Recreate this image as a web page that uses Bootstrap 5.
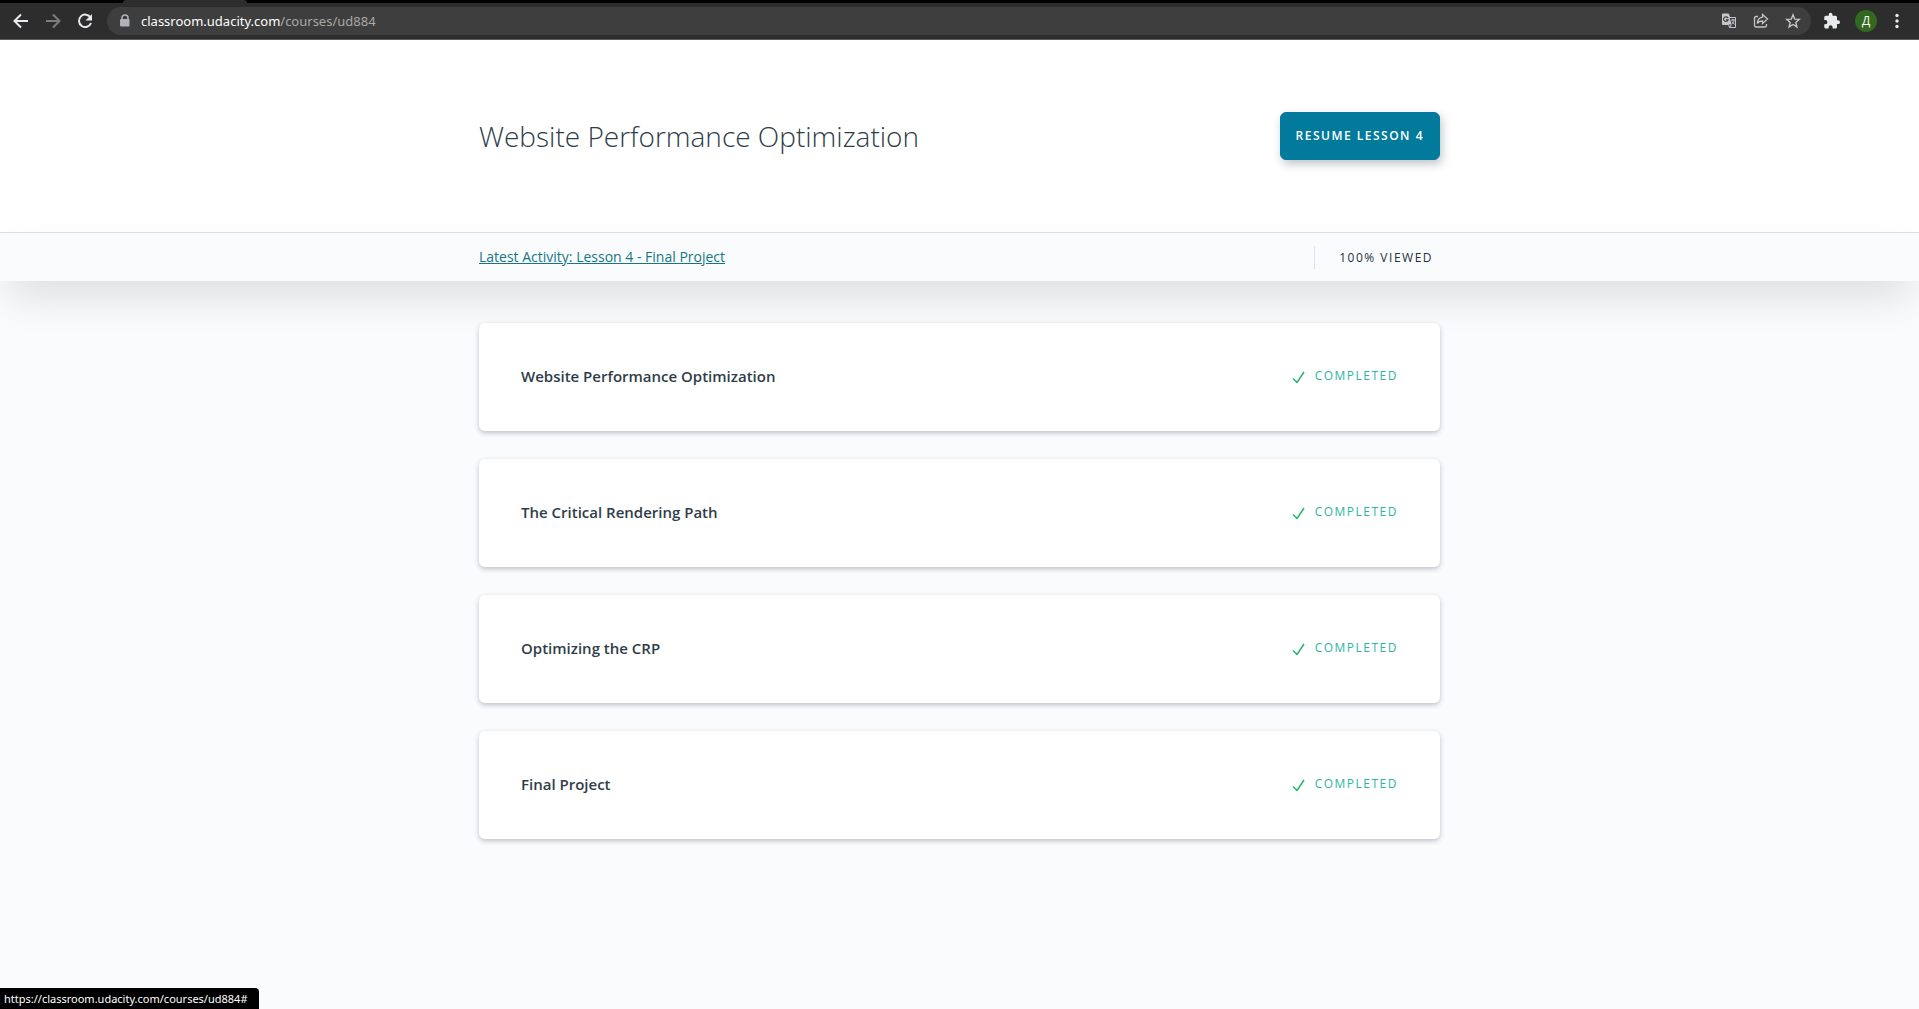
<!DOCTYPE html>
<html lang="en">
<head>
<meta charset="utf-8">
<meta name="viewport" content="width=device-width, initial-scale=1">
<title>Website Performance Optimization</title>
<link href="https://cdn.jsdelivr.net/npm/bootstrap@5.3.0/dist/css/bootstrap.min.css" rel="stylesheet">
<style>
  body { font-family: "Open Sans", "Noto Sans", sans-serif; background: #fafbfd; color: #2e3d49; }
  .browser-tabs { height: 3px; background: #000; }
  .browser-tabs span { display: block; width: 124px; height: 3px; margin-left: 123px; background: #2d2d2d; border-radius: 3px 3px 0 0; }
  .browser-bar { height: 37px; background: #2d2d2d; border-bottom: 1px solid #5a5a5a; padding: 0 10px 0 9px; }
  .tool-btn { width: 24px; height: 24px; color: #e8eaed; }
  .tool-btn.muted { color: #7d7d7d; }
  .tool-btn svg, .address svg { display: block; }
  .address { height: 28px; border-radius: 14px; background: #3e3e3e; padding: 0 6px 0 12px; margin-left: 2px; color: #c4c6c9; }
  .url { font-family: "Noto Sans", sans-serif; font-size: 13px; line-height: 20px; color: #a8a8a8; text-decoration: none; }
  .url b { font-weight: 400; color: #fff; }
  .padlock { margin-right: 10px; }
  .avatar { width: 22px; height: 22px; background: #33691e; color: #fff; font-size: 12px; line-height: 20px; }
  .course-wrap { width: 100%; max-width: 961px; }
  .course-head { background: #fff; padding: 72px 0; }
  .course-title { font-size: 28px; font-weight: 300; line-height: 48px; }
  .caps { font-size: 12px; letter-spacing: .125em; }
  .resume { --bs-btn-bg: #017a9b; --bs-btn-color: #fff; --bs-btn-border-color: #017a9b; --bs-btn-hover-bg: #016a87; --bs-btn-hover-color: #fff; --bs-btn-font-size: 12px; height: 48px; padding: 0 15px; border-radius: 6px; font-weight: 600; box-shadow: 2px 4px 10px rgba(46,61,73,.3); }
  .activity { background: #fafbfd; border-top: 1px solid #dbdee2; height: 49px; box-shadow: 0 20px 40px -8px rgba(0,0,0,.15); }
  .activity a { font-size: 14px; line-height: 24px; color: #157783; }
  .viewed { border-left: 1px solid #dbe2e8; padding: 0 7px 0 24px; line-height: 23px; color: #25313c; }
  .lessons { padding: 42px 0; gap: 28px; }
  .lesson { height: 108px; padding: 0 42px 2px; background: #fff; border-radius: 6px; box-shadow: 0 2px 5px rgba(46,61,73,.3); color: #2e3d49; text-decoration: none; }
  .lesson h2 { font-size: 15px; font-weight: 600; line-height: 24px; }
  .done { gap: 9px; line-height: 20px; color: #2cb5a5; }
  .status-url { position: fixed; left: 0; bottom: 0; height: 21px; padding: 0 11px 0 4px; background: #000; color: #fff; border-top-right-radius: 4px; font-family: "Noto Sans", sans-serif; font-size: 11px; line-height: 21px; }
</style>
</head>
<body>
<div class="browser-tabs"><span></span></div>
<nav class="browser-bar d-flex align-items-center" aria-label="Browser">
  <button class="tool-btn btn p-0 border-0 me-2" aria-label="Back"><svg width="24" height="24" viewBox="0 0 24 24" fill="none" stroke="currentColor" stroke-width="2"><path d="M19 12H6M12 5.500L5.500 12l6.500 6.500"/></svg></button>
  <button class="tool-btn muted btn p-0 border-0 me-2" aria-label="Forward"><svg width="24" height="24" viewBox="0 0 24 24" fill="none" stroke="currentColor" stroke-width="2"><path d="M5 12h13M12 5.500l6.500 6.500-6.500 6.500"/></svg></button>
  <button class="tool-btn btn p-0 border-0 me-2" aria-label="Reload"><svg width="24" height="24" viewBox="0 0 24 24" fill="none" stroke="currentColor" stroke-width="2"><path d="M17.500 8.600A6.200 6.200 0 1 0 18 14"/><path d="M19 5v6.500h-6.500z" fill="currentColor" stroke="none"/></svg></button>
  <div class="address d-flex align-items-center flex-grow-1">
    <svg class="padlock" width="12" height="14" viewBox="0 0 12 14"><path d="M3 6V4a3 3 0 0 1 6 0v2" fill="none" stroke="#b0b2b5" stroke-width="1.500"/><rect x="1" y="5" width="9.500" height="7.500" rx="1" fill="#b0b2b5"/></svg>
    <a class="url me-auto" href="#"><b>classroom.udacity.com</b>/courses/ud884</a>
    <svg width="16" height="16" viewBox="0 0 16 16" aria-hidden="true"><path d="M1.500 1h6l1.300 3.500H14.500V14.500H8.500L7.500 11.500H1.500z" fill="none" stroke="currentColor" stroke-width="1"/><path d="M1.500 1h6l3.200 10.500H1.500z" fill="currentColor"/><path d="M7 5.200A2.300 2.300 0 1 0 7.100 6.800H5" fill="none" stroke="#3e3e3e" stroke-width="1.200"/><path d="M10 7h4M12 6v1.500M13 7.500c-.4 2-1.500 3-2 3.500M11 8.500l2.500 3M10.500 11.500L8.500 14.500" fill="none" stroke="currentColor"/></svg>
    <svg class="ms-3" width="16" height="16" viewBox="0 0 16 16" fill="none" stroke="currentColor" stroke-width="1.300" aria-hidden="true"><path d="M5 3.500H3A1.500 1.500 0 0 0 1.500 5v7.500A1.500 1.500 0 0 0 3 14h9a1.500 1.500 0 0 0 1.500-1.500V11"/><path d="M9.500 1.500L14.500 6l-5 4.500V8C7 8 5.500 8.700 4.300 10.500 4.600 7 6.500 4.500 9.500 4.200z"/></svg>
    <svg class="ms-3 me-1" width="16" height="16" viewBox="0 0 16 16" fill="none" stroke="currentColor" stroke-width="1.400" aria-hidden="true"><path d="M8 1.800l1.700 4.300 4.600.3-3.500 3 1.100 4.500L8 11.500l-3.900 2.400 1.100-4.500-3.500-3 4.600-.3z"/></svg>
  </div>
  <button class="tool-btn btn p-0 border-0 ms-2 me-2" aria-label="Extensions"><svg width="24" height="24" viewBox="-5 -4 32 32" fill="currentColor"><path d="M20.500 11H19V7a2 2 0 0 0-2-2h-4V3.500a2.500 2.500 0 0 0-5 0V5H4a2 2 0 0 0-2 2v3.800h1.500a2.700 2.700 0 0 1 0 5.400H2V20c0 1.100.9 2 2 2h3.800v-1.500a2.700 2.700 0 0 1 5.400 0V22H17a2 2 0 0 0 2-2v-4h1.500a2.500 2.500 0 0 0 0-5z"/></svg></button>
  <button class="avatar btn p-0 border-0 rounded-circle ms-1">Д</button>
  <button class="tool-btn btn p-0 border-0 ms-2" aria-label="Menu"><svg width="24" height="24" viewBox="0 0 24 24" fill="currentColor"><circle cx="12" cy="6.500" r="1.700"/><circle cx="12" cy="12" r="1.700"/><circle cx="12" cy="17.500" r="1.700"/></svg></button>
</nav>

<header>
  <div class="course-head">
    <div class="course-wrap mx-auto d-flex justify-content-between align-items-center">
      <h1 class="course-title m-0">Website Performance Optimization</h1>
      <button class="resume caps btn">RESUME LESSON 4</button>
    </div>
  </div>
  <div class="activity d-flex align-items-center">
    <div class="course-wrap mx-auto d-flex justify-content-between align-items-center">
      <a href="#">Latest Activity: Lesson 4 - Final Project</a>
      <div class="viewed caps">100% VIEWED</div>
    </div>
  </div>
</header>

<main class="lessons course-wrap mx-auto d-flex flex-column">
  <a class="lesson d-flex justify-content-between align-items-center" href="#"><h2 class="m-0">Website Performance Optimization</h2><span class="done caps d-flex align-items-center"><svg width="14" height="14" viewBox="0 0 14 14" fill="none" stroke="#2fb573" stroke-width="1.600"><path d="M1 9.500l4 4L12 3"/></svg>COMPLETED</span></a>
  <a class="lesson d-flex justify-content-between align-items-center" href="#"><h2 class="m-0">The Critical Rendering Path</h2><span class="done caps d-flex align-items-center"><svg width="14" height="14" viewBox="0 0 14 14" fill="none" stroke="#2fb573" stroke-width="1.600"><path d="M1 9.500l4 4L12 3"/></svg>COMPLETED</span></a>
  <a class="lesson d-flex justify-content-between align-items-center" href="#"><h2 class="m-0">Optimizing the CRP</h2><span class="done caps d-flex align-items-center"><svg width="14" height="14" viewBox="0 0 14 14" fill="none" stroke="#2fb573" stroke-width="1.600"><path d="M1 9.500l4 4L12 3"/></svg>COMPLETED</span></a>
  <a class="lesson d-flex justify-content-between align-items-center" href="#"><h2 class="m-0">Final Project</h2><span class="done caps d-flex align-items-center"><svg width="14" height="14" viewBox="0 0 14 14" fill="none" stroke="#2fb573" stroke-width="1.600"><path d="M1 9.500l4 4L12 3"/></svg>COMPLETED</span></a>
</main>
<div class="status-url">https://classroom.udacity.com/courses/ud884#</div>
<script src="https://cdn.jsdelivr.net/npm/bootstrap@5.3.0/dist/js/bootstrap.bundle.min.js"></script>
</body>
</html>
